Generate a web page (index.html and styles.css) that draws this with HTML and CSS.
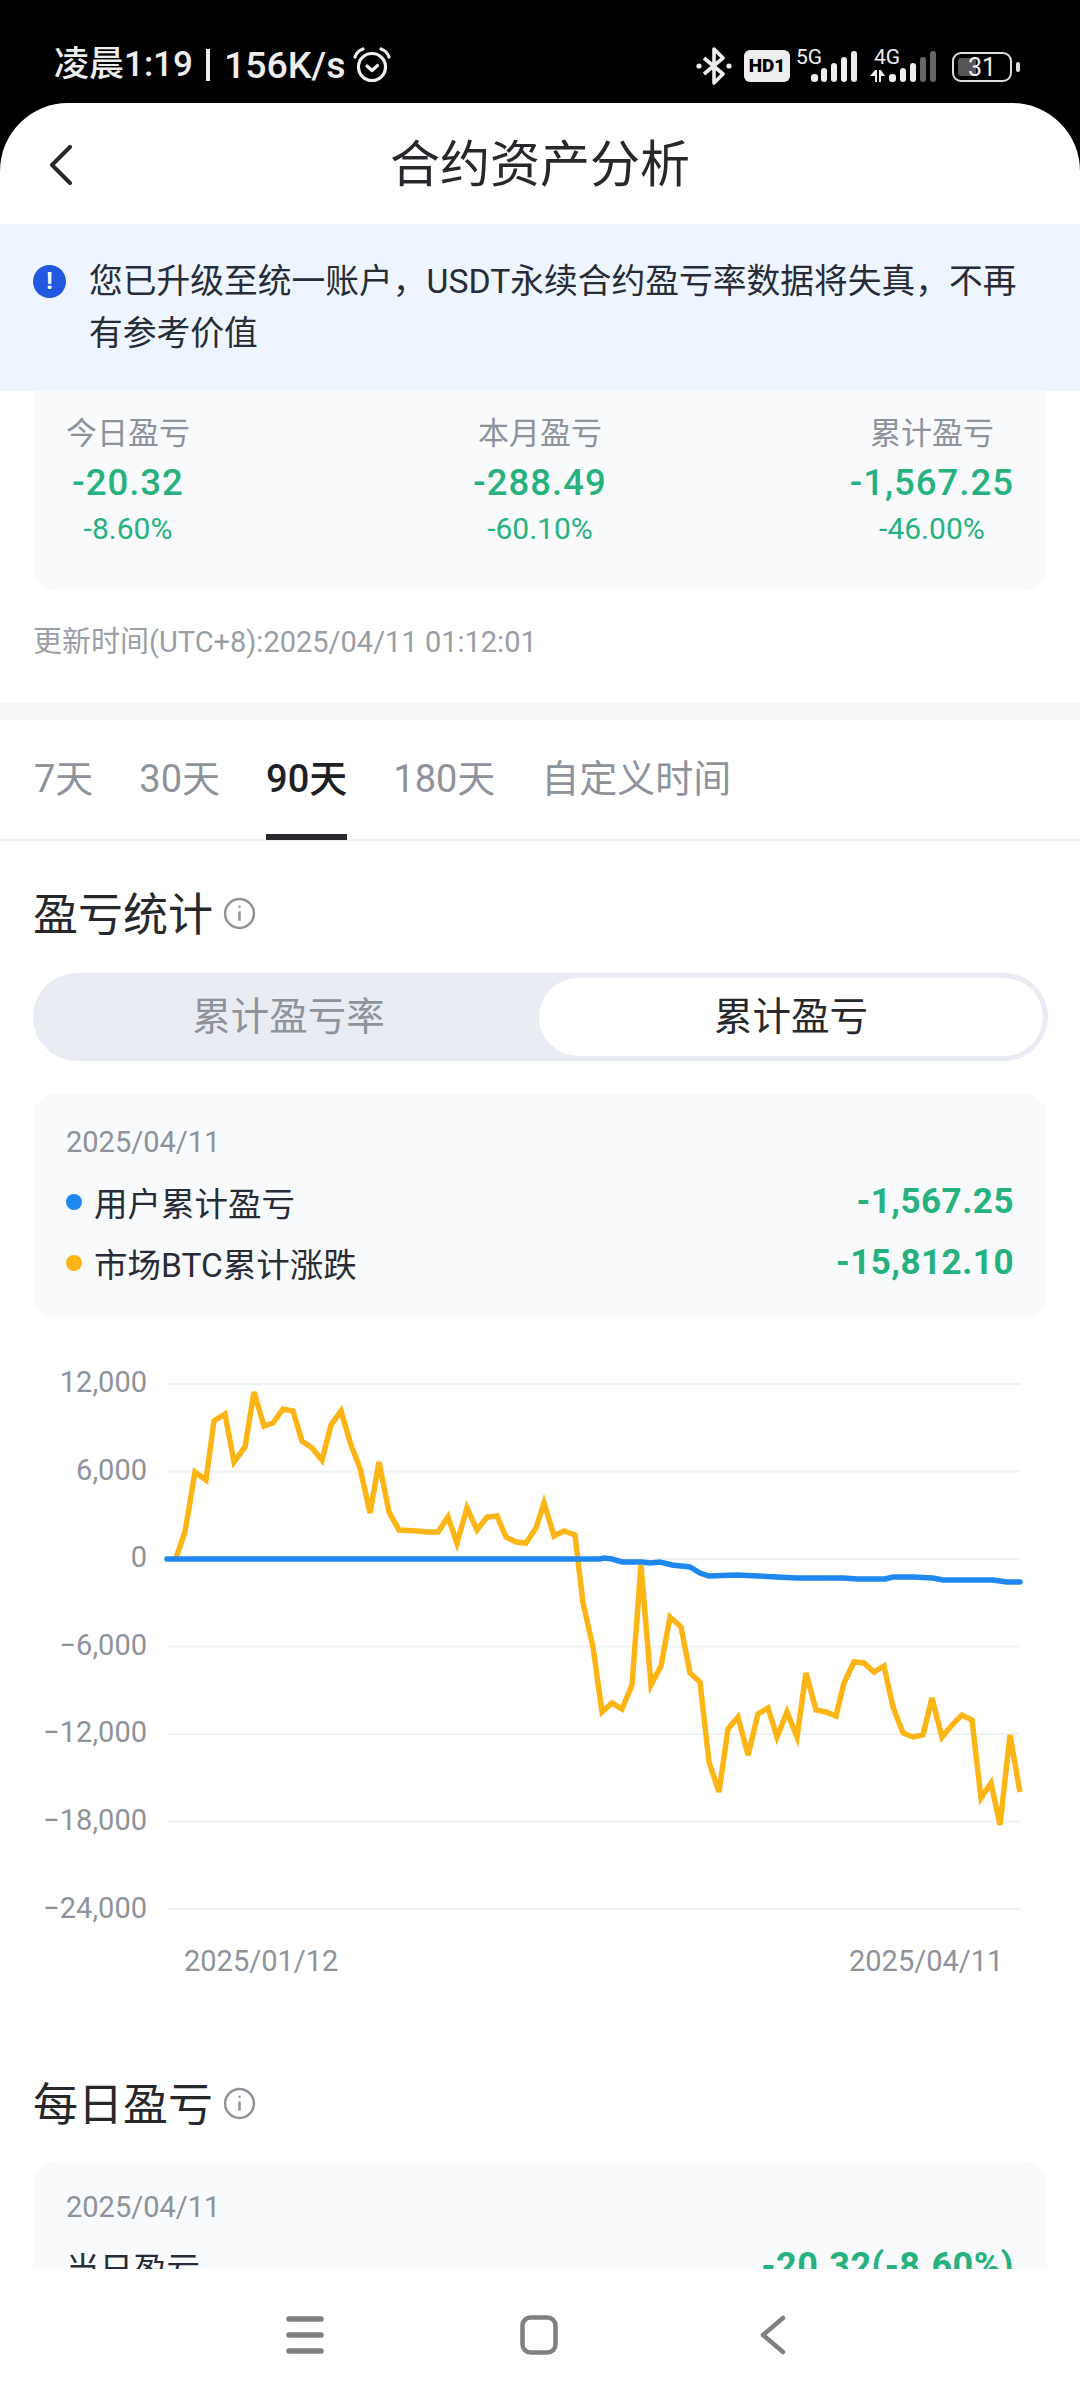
FILE: index.html
```html
<!DOCTYPE html>
<html lang="zh-CN">
<head>
    <meta charset="UTF-8">
    <meta name="viewport" content="width=device-width, initial-scale=1.0">
    <title>合约资产分析</title>
    <link rel="stylesheet" href="styles.css">
</head>
<body>
    <div class="status-bar">
        <div class="status-left">
            <span class="status-time">凌晨1:19</span>
            <span class="status-sep"></span>
            <span class="status-speed">156K/s</span>
            <svg class="alarm" width="38" height="36" viewBox="0 0 38 36" fill="none" stroke="#eee" stroke-width="3.2" stroke-linecap="round" stroke-linejoin="round">
                <circle cx="19" cy="20" r="13.5"/>
                <path d="M2 10 Q4 4 10 2"/>
                <path d="M36 10 Q34 4 28 2"/>
                <path d="M14 19 L19 23.5 L24.5 18.5"/>
            </svg>
        </div>
        <div class="status-right">
            <svg class="bt" width="36" height="38" viewBox="0 0 36 38" fill="none" stroke="#eee" stroke-width="3.6" stroke-linejoin="round">
                <path d="M8 11 L27 27 L18 36 V2 L27 11 L8 27"/>
                <circle cx="3" cy="19" r="2.6" fill="#eee" stroke="none"/>
                <circle cx="33" cy="19" r="2.6" fill="#eee" stroke="none"/>
            </svg>
            <span class="hd-badge">HD1</span>
            <div class="sim">
                <span class="sim-label">5G</span>
                <svg width="46" height="32" viewBox="0 0 46 32" fill="#eee">
                    <rect x="0" y="24" width="7" height="8" rx="3"/>
                    <rect x="10" y="18" width="6" height="14" rx="3"/>
                    <rect x="20" y="13" width="6" height="19" rx="3"/>
                    <rect x="30" y="7" width="6" height="25" rx="3"/>
                    <rect x="40" y="1" width="6" height="31" rx="3"/>
                </svg>
            </div>
            <div class="sim sim-second">
                <span class="sim-label">4G</span>
                <svg width="66" height="32" viewBox="0 0 66 32" fill="#eee">
                    <path d="M0 26 L5 20 H7 V32 H5 V26Z"/>
                    <path d="M9 20 H11 L15 26 H11 V32 H9Z"/>
                    <rect x="19" y="24" width="7" height="8" rx="3"/>
                    <rect x="30" y="18" width="6" height="14" rx="3"/>
                    <rect x="40" y="13" width="6" height="19" rx="3"/>
                    <rect class="bar-off" x="50" y="7" width="6" height="25" rx="3"/>
                    <rect class="bar-off" x="60" y="1" width="6" height="31" rx="3"/>
                </svg>
            </div>
            <div class="battery">
                <div class="battery-body">
                    <div class="battery-fill"></div>
                    <span class="battery-num">31</span>
                </div>
                <div class="battery-nub"></div>
            </div>
        </div>
    </div>

    <div class="sheet">
        <div class="header">
            <svg class="back" width="24" height="40" viewBox="0 0 24 40" fill="none" stroke="#26282c" stroke-width="4" stroke-linecap="round" stroke-linejoin="round">
                <path d="M21 2 L3 20 L21 38"/>
            </svg>
            <div class="header-title">合约资产分析</div>
        </div>

        <div class="notice">
            <span class="notice-icon">!</span>
            <div class="notice-text">您已升级至统一账户，USDT永续合约盈亏率数据将失真，不再有参考价值</div>
        </div>

        <div class="summary-wrap">
            <div class="summary">
                <div class="summary-col col-start">
                    <div class="summary-label">今日盈亏</div>
                    <div class="summary-value">-20.32</div>
                    <div class="summary-rate">-8.60%</div>
                </div>
                <div class="summary-col">
                    <div class="summary-label">本月盈亏</div>
                    <div class="summary-value">-288.49</div>
                    <div class="summary-rate">-60.10%</div>
                </div>
                <div class="summary-col col-end">
                    <div class="summary-label">累计盈亏</div>
                    <div class="summary-value">-1,567.25</div>
                    <div class="summary-rate">-46.00%</div>
                </div>
            </div>
            <div class="update-time">更新时间(UTC+8):2025/04/11 01:12:01</div>
        </div>

        <div class="divider"></div>

        <div class="tabs">
            <div class="tab">7天</div>
            <div class="tab">30天</div>
            <div class="tab tab-active">90天</div>
            <div class="tab">180天</div>
            <div class="tab">自定义时间</div>
        </div>

        <div class="section">
            <div class="section-title">
                <span>盈亏统计</span>
                <svg class="info" width="33" height="33" viewBox="0 0 32 32" fill="none" stroke="#8e939b" stroke-width="2.4">
                    <circle cx="16" cy="16" r="14"/>
                    <path d="M16 14 V23"/>
                    <circle cx="16" cy="9.5" r="1.2" fill="#8e939b" stroke="none"/>
                </svg>
            </div>

            <div class="switcher">
                <div class="switcher-item">累计盈亏率</div>
                <div class="switcher-item switcher-on">累计盈亏</div>
            </div>

            <div class="legend-card">
                <div class="card-date">2025/04/11</div>
                <div class="legend-row">
                    <span class="dot dot-blue"></span>
                    <span class="legend-name">用户累计盈亏</span>
                    <span class="legend-value">-1,567.25</span>
                </div>
                <div class="legend-row">
                    <span class="dot dot-yellow"></span>
                    <span class="legend-name">市场BTC累计涨跌</span>
                    <span class="legend-value">-15,812.10</span>
                </div>
            </div>
        </div>

        <!-- y 轴 12000 到 -24000，每格 87.5 -->
        <svg class="chart" width="1080" height="620" viewBox="0 1360 1080 620">
            <g class="grid-lines">
                <line x1="167" x2="1020" y1="1384" y2="1384"/>
                <line x1="167" x2="1020" y1="1471.5" y2="1471.5"/>
                <line x1="167" x2="1020" y1="1559" y2="1559"/>
                <line x1="167" x2="1020" y1="1646.5" y2="1646.5"/>
                <line x1="167" x2="1020" y1="1734" y2="1734"/>
                <line x1="167" x2="1020" y1="1821.5" y2="1821.5"/>
                <line x1="167" x2="1020" y1="1909" y2="1909"/>
            </g>
            <g class="axis-y">
                <text x="147" y="1392">12,000</text>
                <text x="147" y="1480">6,000</text>
                <text x="147" y="1567">0</text>
                <text x="147" y="1655">−6,000</text>
                <text x="147" y="1742">−12,000</text>
                <text x="147" y="1830">−18,000</text>
                <text x="147" y="1918">−24,000</text>
            </g>
            <g class="axis-x">
                <text x="184" y="1971">2025/01/12</text>
                <text x="849" y="1971">2025/04/11</text>
            </g>
            <polyline class="line-btc" points="176,1558 185,1532 195,1472 206,1480 214,1421 225,1414 234,1462 245,1447 254,1392 264,1426 273,1423 283,1409 293,1411 302,1441 312,1448 322,1460 331,1425 341,1411 351,1445 360,1468 370,1513 379,1462 389,1512 399,1530 417,1531 427,1532 438,1532 448,1517 457,1543 467,1508 477,1530 487,1517 497,1516 506,1537 516,1542 526,1543 536,1528 544,1503 554,1536 564,1531 575,1535 583,1603 593,1647 602,1712 612,1703 622,1709 632,1685 641,1565 651,1685 661,1666 670,1617 681,1627 690,1673 700,1682 709,1762 719,1792 728,1729 738,1717 748,1755 758,1714 768,1708 777,1737 787,1712 797,1737 806,1673 816,1710 826,1712 836,1716 844,1683 854,1662 864,1663 874,1672 884,1666 893,1707 903,1733 913,1737 923,1735 932,1698 942,1737 952,1725 962,1715 972,1720 981,1798 991,1783 1000,1825 1010,1735 1020,1792"/>
            <polyline class="line-user" points="167,1559 600,1559 604,1558 612,1559 622,1562 642,1562 650,1563 660,1562 672,1565 690,1567 700,1573 709,1576 737,1575 777,1577 797,1578 843,1578 857,1579 885,1579 893,1577 913,1577 933,1578 943,1580 970,1580 993,1580 1007,1582 1020,1582"/>
        </svg>

        <div class="section section-daily">
            <div class="section-title">
                <span>每日盈亏</span>
                <svg class="info" width="33" height="33" viewBox="0 0 32 32" fill="none" stroke="#8e939b" stroke-width="2.4">
                    <circle cx="16" cy="16" r="14"/>
                    <path d="M16 14 V23"/>
                    <circle cx="16" cy="9.5" r="1.2" fill="#8e939b" stroke="none"/>
                </svg>
            </div>
            <div class="daily-card">
                <div class="card-date">2025/04/11</div>
                <div class="daily-row">
                    <span class="legend-name">当日盈亏</span>
                    <span class="legend-value daily-value">-20.32(-8.60%)</span>
                </div>
            </div>
        </div>
    </div>

    <div class="nav-bar">
        <svg width="38" height="38" viewBox="0 0 38 38" fill="none" stroke="#808080" stroke-width="5.5" stroke-linecap="round">
            <path d="M3 3 H35 M3 19 H35 M3 35 H35"/>
        </svg>
        <svg width="38" height="40" viewBox="0 0 38 40" fill="none" stroke="#808080" stroke-width="4.5">
            <rect x="2.5" y="2.5" width="33" height="35" rx="8"/>
        </svg>
        <svg width="26" height="40" viewBox="0 0 26 40" fill="none" stroke="#808080" stroke-width="4.5" stroke-linecap="round" stroke-linejoin="round">
            <path d="M23 3 L3 20 L23 37"/>
        </svg>
    </div>
</body>
</html>
```

FILE: styles.css
```css
* {
    box-sizing: border-box;
}
html, body {
    margin: 0;
    padding: 0;
}
body {
    width: 1080px;
    height: 2400px;
    overflow: hidden;
    position: relative;
    background: #000;
    font-family: Roboto, "Noto Sans CJK SC", sans-serif;
    color: #26282c;
}

/* 状态栏 */
.status-bar {
    height: 103px;
    padding: 43px 60px 0 54px;
    display: flex;
    justify-content: space-between;
    align-items: flex-start;
    color: #eee;
}
.status-left {
    display: flex;
    align-items: center;
    line-height: 44px;
    font-weight: 500;
}
.status-time {
    font-size: 35px;
}
.status-speed {
    font-size: 37.5px;
}
.status-sep {
    width: 4px;
    height: 32px;
    background: #eee;
    margin: 0 14px 0 13px;
}
.alarm {
    margin-left: 7px;
}
.status-right {
    display: flex;
    align-items: flex-start;
    margin-top: 4px;
}
.bt {
    margin-right: 12px;
}
.hd-badge {
    width: 46px;
    height: 32px;
    margin-top: 3px;
    margin-right: 6px;
    background: #eee;
    border-radius: 6px;
    color: #000;
    font-size: 19px;
    font-weight: 900;
    line-height: 32px;
    text-align: center;
}
.sim {
    position: relative;
    width: 61px;
    height: 35px;
    display: flex;
    justify-content: flex-end;
    align-items: flex-end;
}
.sim-second {
    width: 66px;
    margin-left: 13px;
}
.sim-label {
    position: absolute;
    top: 0;
    left: 0;
    font-size: 21px;
    line-height: 20px;
}
.sim-second .sim-label {
    left: 4px;
}
.bar-off {
    fill: #666;
}
.battery {
    display: flex;
    align-items: center;
    margin-left: 16px;
    margin-top: 5px;
}
.battery-body {
    position: relative;
    width: 60px;
    height: 30px;
    border: 2.5px solid #ddd;
    border-radius: 9px;
    display: flex;
    align-items: center;
    justify-content: center;
}
.battery-fill {
    position: absolute;
    left: 4px;
    top: 4px;
    bottom: 4px;
    width: 18px;
    background: #555;
    border-radius: 3px;
}
.battery-num {
    position: relative;
    font-size: 25px;
    line-height: 25px;
    color: #eee;
}
.battery-nub {
    width: 4px;
    height: 10px;
    margin-left: 4px;
    background: #ddd;
    border-radius: 2px;
}

/* 页面主体 */
.sheet {
    height: 2297px;
    background: #fff;
    border-radius: 68px 68px 0 0;
    overflow: hidden;
}
.header {
    height: 121px;
    position: relative;
    display: flex;
    align-items: center;
    justify-content: center;
    padding-top: 3px;
}
.back {
    position: absolute;
    left: 49px;
    top: 42px;
}
.header-title {
    font-size: 50px;
    line-height: 60px;
}
.notice {
    height: 167px;
    padding: 32px 40px 0 33px;
    background: #eef5fe;
    display: flex;
    align-items: flex-start;
    gap: 23px;
}
.notice-icon {
    flex: none;
    width: 33px;
    height: 33px;
    margin-top: 9px;
    border-radius: 50%;
    background: #2257e0;
    color: #fff;
    font-size: 24px;
    font-weight: 700;
    line-height: 33px;
    text-align: center;
}
.notice-text {
    font-size: 33.75px;
    line-height: 52px;
    color: #282c36;
}
.summary-wrap {
    padding: 0 33px;
    height: 312px;
}
.summary {
    height: 200px;
    padding: 22px 33px 0;
    background: #f8fafc;
    border-radius: 0 0 22px 22px;
    display: grid;
    grid-template-columns: 1fr auto 1fr;
}
.summary-col {
    text-align: center;
}
.col-start {
    justify-self: start;
}
.col-end {
    justify-self: end;
}
.summary-label {
    font-size: 31px;
    line-height: 42px;
    color: #8e939b;
}
.summary-value {
    margin-top: 4px;
    font-size: 36.5px;
    line-height: 48px;
    font-weight: 500;
    letter-spacing: 1px;
    color: #26b27f;
}
.summary-rate {
    margin-top: 4px;
    font-size: 30px;
    line-height: 36px;
    color: #26b27f;
}
.update-time {
    margin-top: 31px;
    font-size: 29px;
    line-height: 40px;
    color: #9a9ea5;
}
.divider {
    height: 17px;
    background: #f6f7f8;
}
.tabs {
    height: 121px;
    padding: 0 34px;
    display: flex;
    gap: 46px;
    border-bottom: 2px solid #eef0f2;
}
.tab {
    height: 120px;
    padding-top: 34px;
    font-size: 38px;
    line-height: 50px;
    color: #8e939b;
}
.tab-active {
    color: #1d2025;
    font-weight: 500;
    border-bottom: 6px solid #26282c;
}
.section {
    padding: 0 33px;
}
.section-title {
    display: flex;
    align-items: center;
    gap: 10px;
    height: 60px;
    margin-top: 40px;
    font-size: 45px;
    color: #26282c;
}
.info {
    margin-top: 4px;
}
.switcher {
    height: 88px;
    margin-top: 32px;
    margin-right: -1px;
    padding: 5px;
    background: #eaecf3;
    border-radius: 44px;
    display: grid;
    grid-template-columns: 1fr 504px;
}
.switcher-item {
    font-size: 38.5px;
    line-height: 78px;
    text-align: center;
    color: #8e939b;
}
.switcher-on {
    background: #fff;
    border-radius: 39px;
    color: #26282c;
}
.legend-card {
    height: 223px;
    margin-top: 33px;
    padding: 28px 33px 0;
    background: #f8fafc;
    border-radius: 22px;
}
.card-date {
    font-size: 29px;
    line-height: 40px;
    margin-bottom: 9px;
    color: #8e939b;
}
.legend-row {
    display: flex;
    align-items: center;
    height: 61px;
}
.dot {
    width: 16px;
    height: 16px;
    margin-right: 12px;
    border-radius: 50%;
}
.dot-blue {
    background: #1e88f0;
}
.dot-yellow {
    background: #fcb515;
}
.legend-name {
    font-size: 33.5px;
    color: #282c36;
}
.legend-value {
    margin-left: auto;
    font-size: 35px;
    font-weight: 700;
    letter-spacing: 0.5px;
    color: #26b27f;
}
.daily-value {
    font-size: 36px;
}

/* 折线图 */
.chart {
    display: block;
    margin-top: 43px;
}
.grid-lines line {
    stroke: #f0f2f5;
    stroke-width: 2;
}
.axis-y text {
    fill: #8e939b;
    font-size: 29px;
    text-anchor: end;
}
.axis-x text {
    fill: #8e939b;
    font-size: 29px;
}
.line-btc, .line-user {
    fill: none;
    stroke-width: 5.5;
    stroke-linejoin: miter;
    stroke-linecap: butt;
}
.line-btc {
    stroke: #fcb515;
}
.line-user {
    stroke: #1e88f0;
    stroke-linecap: round;
}
.section-daily .section-title {
    margin-top: 91px;
}
.daily-card {
    margin-top: 30px;
    padding: 26px 33px 0;
    height: 160px;
    background: #f8fafc;
    border-radius: 22px;
}
.daily-row {
    display: flex;
    align-items: center;
    height: 60px;
}

/* 底部导航 */
.nav-bar {
    position: absolute;
    left: 0;
    right: 0;
    bottom: 0;
    height: 131px;
    padding-left: 188px;
    background: #fff;
    display: grid;
    grid-template-columns: repeat(3, 234px);
    justify-items: center;
    align-items: center;
}
```
